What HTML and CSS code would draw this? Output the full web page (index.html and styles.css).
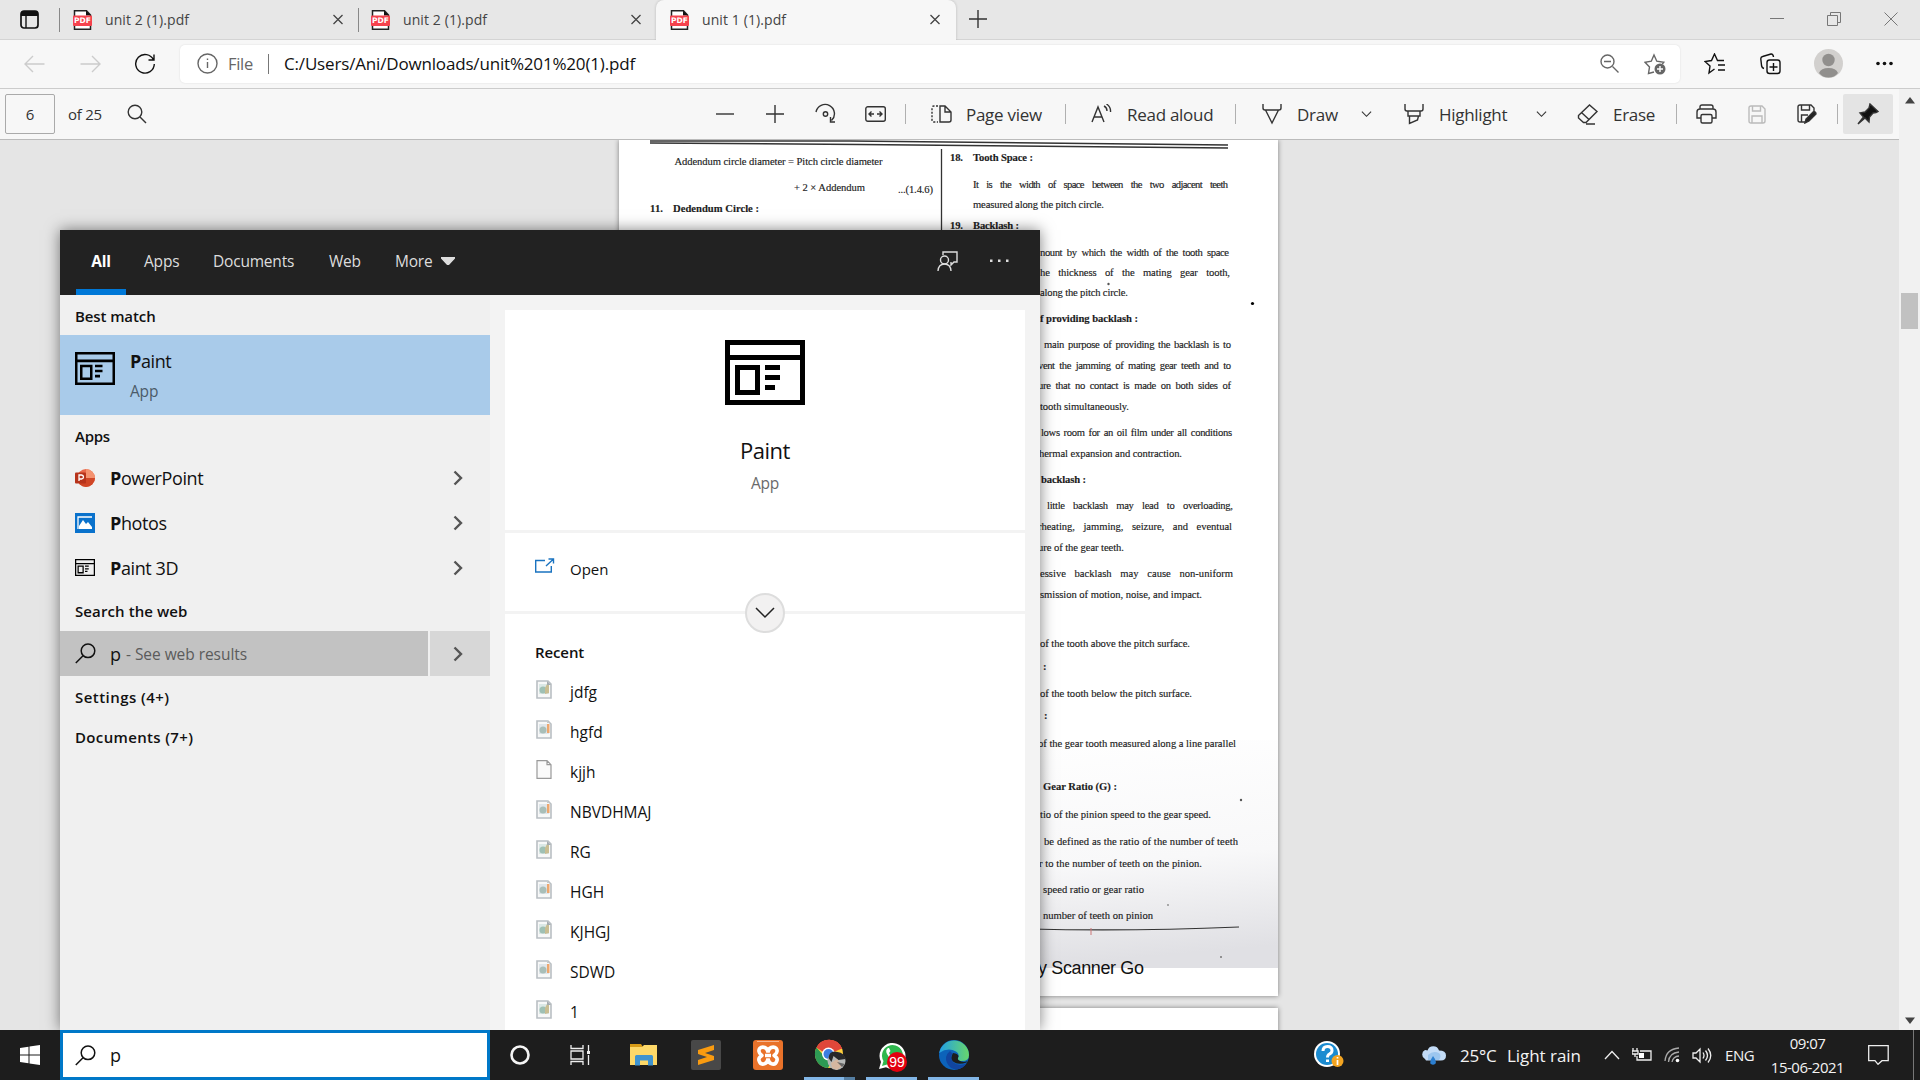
FILE: index.html
```html
<!DOCTYPE html>
<html lang="en">
<head>
<meta charset="utf-8">
<title>unit 1 (1).pdf</title>
<link rel="stylesheet" href="styles.css">
</head>
<body>
<svg width="0" height="0" class="defs">
  <symbol id="pdf" viewBox="0 0 19 20"><path d="M1.5 .8h12l4 4.2v14.2h-16z" fill="#fff" stroke="#222" stroke-width="1.5"/><path d="M13 .5v5h5z" fill="#111"/><rect y="5.5" width="19" height="10.5" rx="1" fill="#f5424d"/></symbol>
  <symbol id="x" viewBox="0 0 10 10"><path d="M.5.5l9 9M9.5.5l-9 9" fill="none" stroke="currentColor" stroke-width="1.3"/></symbol>
  <symbol id="down" viewBox="0 0 12 8"><path d="M1 1.5l5 5 5-5" fill="none" stroke="currentColor" stroke-width="1.2"/></symbol>
  <symbol id="right" viewBox="0 0 10 16"><path d="M1.5 1.5L8 8l-6.500 6.500" fill="none" stroke="#555" stroke-width="2.4"/></symbol>
  <symbol id="lens" viewBox="0 0 21 21"><circle cx="13" cy="7.800" r="6.800" fill="none" stroke="currentColor" stroke-width="1.5"/><path d="M8 12.700L.8 20" stroke="currentColor" stroke-width="1.5"/></symbol>
  <symbol id="window" viewBox="0 0 80 65" preserveAspectRatio="none"><path d="M0 0h80v65H0zM5 5v10h70V5zM5 20v40h70V20z" fill-rule="evenodd"/><path d="M10 25h25v30H10zM15 30v20h15V30z" fill-rule="evenodd"/><path d="M40 25h15v5H40zM40 35h15v5H40zM40 45h10v5H40z"/></symbol>
  <symbol id="image" viewBox="0 0 16 19"><path d="M1 1h11l3 3v14H1z" fill="#f7f8f8" stroke="#b9bfc3" stroke-width="1.600"/><rect x="3" y="4" width="10" height="10" fill="#dbe8e6"/><circle cx="7" cy="10" r="3.500" fill="#9fc0b4"/><path d="M9 14V8l2-4h2v9z" fill="#c9bd92"/><path d="M11 1v4h4" fill="#a5acb0"/></symbol>
  <symbol id="image2" viewBox="0 0 16 19"><path d="M1 1h11l3 3v14H1z" fill="#f7f8f8" stroke="#b9bfc3" stroke-width="1.600"/><rect x="3" y="4" width="10" height="10" fill="#dfe6ea"/><circle cx="7" cy="10" r="3.500" fill="#a9beb8"/><path d="M11 13V4h2.500v9z" fill="#eda66e"/><path d="M11 1v2h3" fill="#c5cacc"/></symbol>
</svg>

<header class="tabstrip">
  <div class="tab-menu"><svg width="19" height="19" viewBox="0 0 19 19"><rect x="1" y="1" width="17" height="17" rx="3" fill="none" stroke="#111" stroke-width="1.700"/><path d="M1 6V3.500Q1 1 3.500 1h12Q18 1 18 3.500V6z" fill="#111"/><path d="M6 5v13" stroke="#111" stroke-width="1.400"/></svg></div>
  <div class="tab first"><span class="pdf-icon"><svg width="19" height="20"><use href="#pdf"/></svg><b>PDF</b></span><span class="name">unit 2 (1).pdf</span><svg width="10" height="11"><use href="#x"/></svg></div>
  <div class="tab"><span class="pdf-icon"><svg width="19" height="20"><use href="#pdf"/></svg><b>PDF</b></span><span class="name">unit 2 (1).pdf</span><svg width="10" height="11"><use href="#x"/></svg></div>
  <div class="tab active"><span class="pdf-icon"><svg width="19" height="20"><use href="#pdf"/></svg><b>PDF</b></span><span class="name">unit 1 (1).pdf</span><svg width="10" height="11"><use href="#x"/></svg></div>
  <svg class="new-tab" width="18" height="18" viewBox="0 0 18 18"><path d="M9 0v18M0 9h18" stroke="#333" stroke-width="1.400"/></svg>
  <div class="window-controls">
    <svg width="14" height="14" viewBox="0 0 14 14"><path d="M0 6.500h14"/></svg>
    <svg width="14" height="14" viewBox="0 0 14 14"><path d="M.5 3.500h10v10H.5zM3.500 3.500v-3h10v10h-3"/></svg>
    <svg width="14" height="14" viewBox="0 0 14 14"><path d="M.5.5l13 13M13.500.5l-13 13"/></svg>
  </div>
</header>

<nav class="toolbar">
  <svg width="21" height="18" viewBox="0 0 21 18" class="dim"><path d="M20.500 9H1.500M9 1L1 9l8 8"/></svg>
  <svg width="21" height="18" viewBox="0 0 21 18" class="dim"><path d="M.5 9h19M12 1l8 8-8 8"/></svg>
  <svg width="22" height="22" viewBox="0 0 22 22" class="dark"><path d="M19.500 7A9.300 9.300 0 1 0 20.300 11M20 1.500V7h-5.500"/></svg>
  <div class="address">
    <svg width="21" height="21" viewBox="0 0 21 21" class="mid"><circle cx="10.500" cy="10.500" r="9.500"/><path d="M10.500 9v6M10.500 5.500v1.500"/></svg>
    <span class="scheme">File</span><i class="rule"></i><span class="url">C:/Users/Ani/Downloads/unit%201%20(1).pdf</span>
    <svg width="19" height="19" viewBox="0 0 19 19" class="mid"><circle cx="7.500" cy="7.500" r="6.500"/><path d="M12.500 12.500l6 6M4 7.500h7"/></svg>
    <svg width="22" height="22" viewBox="0 0 22 22" class="mid"><path d="M10 19l-5.500 1.500 1-6.500L1 9.200l6.300-1L10 2l2.800 6.200 7 1-1.500 2"/><circle cx="16" cy="16" r="5.500" fill="#666" stroke="none"/><path d="M16 13v6M13 16h6" stroke="#fff"/></svg>
  </div>
  <svg width="22" height="22" viewBox="0 0 22 22" class="dark"><path d="M10.500 16l-5.500 4 1-7L1 8.500l6.500-1L10.500 1l3 6.500H20M14 12h7M14 17h7"/></svg>
  <svg width="21" height="22" viewBox="0 0 21 22" class="dark"><path d="M4 15.500Q2 15 1.600 13L.8 6Q.7 4 2.600 3.500L11 1q2-.3 2.500 3"/><rect x="7" y="7" width="13" height="13.500" rx="2.500"/><path d="M13.500 10v8M9.500 14h8"/></svg>
  <svg width="29" height="29" viewBox="0 0 29 29"><circle cx="14.500" cy="14.500" r="14.500" fill="#d2d0ce"/><circle cx="14.500" cy="11" r="6.200" fill="#918f8d"/><path d="M5 24q2-5 9.500-5t9.500 5q-3.500 4.500-9.500 4.500T5 24z" fill="#918f8d"/></svg>
  <svg width="17" height="5" viewBox="0 0 17 5"><circle cx="2" cy="2.500" r="1.800"/><circle cx="8.500" cy="2.500" r="1.800"/><circle cx="15" cy="2.500" r="1.800"/></svg>
</nav>

<main class="viewer">
  <div class="reader">
    <div class="pdf-bar">
      <span class="page-no">6</span><span class="count">of 25</span>
      <svg width="20" height="20" viewBox="0 0 20 20"><circle cx="8" cy="8" r="6.800"/><path d="M13 13l6 6"/></svg>
      <svg width="18" height="18" viewBox="0 0 18 18"><path d="M0 9h18"/></svg>
      <svg width="18" height="18" viewBox="0 0 18 18"><path d="M9 0v18M0 9h18"/></svg>
      <svg width="22" height="22" viewBox="0 0 22 22"><path d="M1 9a9.300 9.300 0 1 1 15.500 8.500M20 19h-4.500v-5"/><circle cx="10.500" cy="11" r="2.200"/></svg>
      <svg width="21" height="16" viewBox="0 0 21 16"><rect x=".8" y=".8" width="19.500" height="14.500" rx="2"/><path d="M9 8H4M6.500 5.500L4 8l2.500 2.500M12 8h5M14.500 5.500L17 8l-2.500 2.500"/></svg>
      <i></i>
      <svg width="21" height="18" viewBox="0 0 21 18"><path d="M9 1h5l6 6v8q0 2-2 2H9zM14 1v6h6"/><path d="M7 1H3Q1 1 1 3v12q0 2 2 2h4" stroke-dasharray="2 1.500"/></svg>
      <span>Page view</span><i></i>
      <svg width="21" height="20" viewBox="0 0 21 20"><path d="M1 18L7 3l6 15M3 13h8M13 2q3 1.500 3 5M15.500 0Q20 3 19.500 8"/></svg>
      <span>Read aloud</span><i></i>
      <svg width="21" height="22" viewBox="0 0 21 22"><path d="M1 1v4q0 2 2 2h14q2 0 2-2V1M3.500 7l6.500 13L16.500 7"/></svg>
      <span>Draw</span><svg width="11" height="8" viewBox="0 0 12 8"><use href="#down"/></svg>
      <svg width="20" height="22" viewBox="0 0 20 22"><path d="M1 1v5q0 2 2 2h14q2 0 2-2V1M4 8v5h12V8M5.500 13v7.500l8-3.500 1-4"/></svg>
      <span>Highlight</span><svg width="11" height="8" viewBox="0 0 12 8"><use href="#down"/></svg>
      <svg width="22" height="21" viewBox="0 0 22 21"><path d="M1.500 11.500L12.500 1 20 7.500 9 18.500H6.500L1.500 14zM5 9l7 6.500M9 20h9"/></svg>
      <span>Erase</span><i></i>
      <svg width="21" height="20" viewBox="0 0 21 20"><path d="M4 5V3q0-2 2-2h9q2 0 2 2v2M5 14H1V8q0-3 3-3h13q3 0 3 3v6h-4"/><rect x="5" y="10.500" width="11" height="8.500" rx="1.500"/></svg>
      <svg width="18" height="19" viewBox="0 0 18 19" class="off"><path d="M1 3q0-2 2-2h11l3 3v12q0 2-2 2H3q-2 0-2-2zM4.500 1v5h8V1M4 18v-7h10v7"/></svg>
      <svg width="21" height="20" viewBox="0 0 21 20"><path d="M8 18H3q-2 0-2-2V3q0-2 2-2h11l3 3v4M4.500 1v5h8V1M4.500 18v-7H11"/><path d="M8 19l1-4 7-7q3-1 3 2l-7 7z" fill="#222"/></svg>
      <i></i>
      <span class="pin"><svg width="22" height="22" viewBox="0 0 22 22"><path d="M13 1l8 7.500-2 1-3 .5-3.500 4-.5 5-4-4L1 21l5.500-7L3 10l5-1 4-4z" fill="#111"/></svg></span>
    </div>
    <div class="canvas">
      <svg class="sheet" width="659" height="856" viewBox="619 140 659 856">
        <defs><linearGradient id="haze" x1=".35" y1="0" x2=".6" y2="1"><stop offset="0" stop-color="#fff"/><stop offset=".6" stop-color="#f8f8f9"/><stop offset="1" stop-color="#e0e0e4"/></linearGradient></defs>
        <rect x="619" y="740" width="659" height="228" fill="url(#haze)"/>
        <g fill="none" stroke="#333"><path d="M650 141L850 141 1228 145" stroke-width="1.500"/><path d="M650 143L860 144.500 1228 148" stroke-width="1.500"/><path d="M941.500 149V240" stroke-width="1.300"/><path d="M1030 929q100 2.500 209-2" stroke-width="1.200"/></g>
        <path d="M1091 928v7" stroke="#c77"/><circle cx="1252.500" cy="303.500" r="1.600"/><circle cx="1108.500" cy="284" r="1.200" fill="#555"/><circle cx="1241" cy="800" r="1.200" fill="#555"/><circle cx="1221" cy="957" r="1" fill="#777"/><circle cx="1168" cy="905" r=".9" fill="#888"/>
        <g class="scan">
          <text x="674.500" y="165" textLength="208">Addendum circle diameter = Pitch circle diameter</text>
          <text x="794" y="191" textLength="71">+ 2 × Addendum</text><text x="898" y="192.500" textLength="35">...(1.4.6)</text>
          <text x="973" y="188" class="wide5" textLength="255">It is the width of space between the two adjacent teeth</text>
          <text x="973" y="208" textLength="131">measured along the pitch circle.</text>
          <text x="1040" y="255.500" class="wide2" textLength="189">nount by which the width of the tooth space</text>
          <text x="1040" y="275.500" class="wide5" textLength="190">he thickness of the mating gear tooth,</text>
          <text x="1040" y="296" textLength="88">along the pitch circle.</text>
          <text x="1044" y="348" class="wide1" textLength="187">main purpose of providing the backlash is to</text>
          <text x="1038" y="368.500" class="wide2" textLength="193">vent the jamming of mating gear teeth and to</text>
          <text x="1038" y="389" class="wide2" textLength="193">ure that no contact is made on both sides of</text>
          <text x="1040" y="410" textLength="89">tooth simultaneously.</text>
          <text x="1041" y="436" class="wide1" textLength="191">lows room for an oil film under all conditions</text>
          <text x="1039" y="457" textLength="143">hermal expansion and contraction.</text>
          <text x="1047" y="509" class="wide5" textLength="186">little backlash may lead to overloading,</text>
          <text x="1038" y="530" class="wide5" textLength="194">rheating, jamming, seizure, and eventual</text>
          <text x="1038" y="550.500" textLength="86">ure of the gear teeth.</text>
          <text x="1040" y="577" class="wide5" textLength="193">essive backlash may cause non-uniform</text>
          <text x="1040" y="597.500" textLength="162">smission of motion, noise, and impact.</text>
          <text x="1040" y="646.500" textLength="150">of the tooth above the pitch surface.</text>
          <text x="1040" y="696.500" textLength="152">of the tooth below the pitch surface.</text>
          <text x="1038" y="746.500" textLength="198">of the gear tooth measured along a line parallel</text>
          <text x="1040" y="818" textLength="171">tio of the pinion speed to the gear speed.</text>
          <text x="1044" y="845" textLength="194">be defined as the ratio of the number of teeth</text>
          <text x="1039" y="866.500" textLength="163">r to the number of teeth on the pinion.</text>
          <text x="1043" y="893" textLength="101">speed ratio or gear ratio</text>
          <text x="1043" y="919" textLength="110">number of teeth on pinion</text>
          <g class="strong">
            <text x="650" y="212" textLength="13">11.</text><text x="673" y="212" textLength="86">Dedendum Circle :</text>
            <text x="950" y="161" textLength="13">18.</text><text x="973" y="161" textLength="60">Tooth Space :</text>
            <text x="950" y="229" textLength="13">19.</text><text x="973" y="229" textLength="46">Backlash :</text>
            <text x="1040" y="322" textLength="98">f providing backlash :</text><text x="1041" y="483" textLength="45">backlash :</text>
            <text x="1043" y="670">:</text><text x="1044" y="719">:</text><text x="1043" y="790" textLength="74">Gear Ratio (G) :</text>
          </g>
          <text x="1038" y="974" class="brand" textLength="106">y Scanner Go</text>
        </g>
      </svg>
      <div class="sheet next"></div>
    </div>
  </div>
  <div class="scrollbar"><svg width="10" height="7" viewBox="0 0 10 7"><path d="M0 6.500L5 0l5 6.500z"/></svg><b></b><svg width="10" height="7" viewBox="0 0 10 7"><path d="M0 .5L5 7l5-6.500z"/></svg></div>
</main>

<section class="search">
  <div class="search-head">
    <span class="on">All</span><span class="apps">Apps</span><span>Documents</span><span>Web</span><span class="more">More<svg width="14" height="8" viewBox="0 0 14 8"><path d="M0 .5h14L7 8z" fill="#ddd"/></svg></span>
    <svg class="feedback" width="21" height="21" viewBox="0 0 21 21"><path d="M6 4V1h14v10h-3l-3 3v-3"/><circle cx="7.500" cy="9" r="4"/><path d="M1 20q.5-7 6.500-7t6.500 7"/></svg>
    <svg width="19" height="4" viewBox="0 0 19 4"><path d="M0 .5h2.500V3H0zM8 .5h2.500V3H8zM16 .5h2.500V3H16z" fill="#ddd" stroke="none"/></svg>
  </div>
  <div class="search-body">
    <div class="results">
      <h3 class="h-best">Best match</h3>
      <div class="best"><svg width="40" height="33"><use href="#window"/></svg><div><p><b>P</b>aint</p><small>App</small></div></div>
      <h3 class="h-apps">Apps</h3>
      <div class="app"><svg width="20" height="20" viewBox="0 0 20 20"><circle cx="11" cy="10" r="9" fill="#e8684a"/><path d="M11 1a9 9 0 0 1 9 9h-9z" fill="#f4926f"/><path d="M2 10a9 9 0 0 0 18 0z" fill="#d04626"/><rect y="4.500" width="11" height="11" rx="1" fill="#b7331b"/><path d="M4 13V7h2.500q2 .2 2 2t-2 2H4" fill="none" stroke="#fff" stroke-width="1.300"/></svg><p><b>P</b>owerPoint</p><svg width="10" height="16"><use href="#right"/></svg></div>
      <div class="app"><svg width="20" height="20" viewBox="0 0 20 20"><path d="M0 0h20v20H0z" fill="#0a72cc"/><path d="M17 4H3v12" fill="none" stroke="#fff" stroke-width="1.300"/><path d="M4 16V13l4-6 3 4 2-2 4 5v2z" fill="#fff"/></svg><p><b>P</b>hotos</p><svg width="10" height="16"><use href="#right"/></svg></div>
      <div class="app"><svg width="20" height="17"><use href="#window"/></svg><p><b>P</b>aint 3D</p><svg width="10" height="16"><use href="#right"/></svg></div>
      <h3 class="h-web">Search the web</h3>
      <div class="web"><div><svg width="21" height="21"><use href="#lens"/></svg><p>p</p><span>- See web results</span></div><em><svg width="10" height="16"><use href="#right"/></svg></em></div>
      <h3 class="h-set">Settings (4+)</h3>
      <h3 class="h-doc">Documents (7+)</h3>
    </div>
    <div class="detail">
      <div class="card hero"><svg width="80" height="65"><use href="#window"/></svg><h2>Paint</h2><p>App</p></div>
      <div class="card open"><svg width="20" height="15" viewBox="0 0 20 15"><path d="M10 2.500H.7v11.500h15.600V8M11 8l7-6.500M13.500 1H18.500V5.500" fill="none" stroke="#1a73c0" stroke-width="1.400"/></svg><span>Open</span>
        <div class="expand"><svg width="20" height="12" viewBox="0 0 20 12"><path d="M1 1l9 9 9-9" fill="none" stroke="#222" stroke-width="1.500"/></svg></div></div>
      <div class="card recent"><h3>Recent</h3>
        <ul>
          <li><svg width="16" height="19"><use href="#image"/></svg>jdfg</li>
          <li><svg width="16" height="19"><use href="#image2"/></svg>hgfd</li>
          <li><svg width="16" height="19" viewBox="0 0 16 19"><path d="M1 .7h10l4 4v13.600H1zM11 .7v4h4" fill="#fafafa" stroke="#999" stroke-width="1.200"/></svg>kjjh</li>
          <li><svg width="16" height="19"><use href="#image2"/></svg>NBVDHMAJ</li>
          <li><svg width="16" height="19"><use href="#image"/></svg>RG</li>
          <li><svg width="16" height="19"><use href="#image2"/></svg>HGH</li>
          <li><svg width="16" height="19"><use href="#image"/></svg>KJHGJ</li>
          <li><svg width="16" height="19"><use href="#image2"/></svg>SDWD</li>
          <li><svg width="16" height="19"><use href="#image"/></svg>1</li>
        </ul>
      </div>
    </div>
  </div>
</section>

<footer class="taskbar">
  <div class="start"><svg width="20" height="20" viewBox="0 0 20 20"><path d="M0 3l8.500-1.200v7.700H0zM9.500 1.600L20 0v9.500H9.500zM0 10.500h8.500v7.800L0 17zM9.500 10.500H20V20L9.500 18.400z" fill="#fff"/></svg></div>
  <div class="searchbox"><svg width="21" height="21"><use href="#lens"/></svg><span>p</span></div>
  <div class="slot s1"><svg width="20" height="20" viewBox="0 0 20 20"><circle cx="10" cy="10" r="8.500" fill="none" stroke="#f5f5f5" stroke-width="2.600"/></svg></div>
  <div class="slot s2"><svg width="21" height="20" viewBox="0 0 21 20"><path d="M1 0v3.500h12V0M1 20v-3.500h12V20M1 6h12v8H1zM18.500 0v6M18.500 10v10" fill="none" stroke="#eee" stroke-width="1.300"/><path d="M17 6h3v3h-3z" fill="#eee"/></svg></div>
  <div class="slot"><svg width="28" height="24" viewBox="0 0 28 24"><path d="M0 1h11l2 3h-13z" fill="#d89b16"/><path d="M0 4h12l2-2h13v20H0z" fill="#fdd868"/><path d="M5 22.500v-9q0-1.500 1.500-1.500h15q1.500 0 1.500 1.500v9h-5v-5h-8v5z" fill="#3f93cf"/></svg></div>
  <div class="slot"><svg width="30" height="30" viewBox="0 0 30 30"><rect width="30" height="30" rx="2" fill="#484848"/><path d="M7 10l16-5v5l-9 3 9 3v4L7 25v-5l9-3-9-3z" fill="#f99b10"/></svg></div>
  <div class="slot"><svg width="30" height="30" viewBox="0 0 30 30"><rect width="30" height="30" rx="3" fill="#e9722a"/><path d="M4 1.500h22" stroke="#f5b48c"/><path d="M15 12.500C14 5 5 6 6 11.500c.4 3 3 3.500 3 4S5 17 6 20.500C7.500 26 14 25 15 18.500c1 6.500 7.500 7.500 9 2 1-3.500-3-4.500-3-5s2.600-1 3-4C25 6 16 5 15 12.500zM12 15.500h6" fill="none" stroke="#fff" stroke-width="3.600"/></svg></div>
  <div class="slot run split"><svg width="32" height="32" viewBox="0 0 32 32"><circle cx="15" cy="15" r="14" fill="#ffcf3d"/><path d="M15 15L2.500 8.500A14 14 0 0 1 28 9.500z" fill="#e0473a"/><path d="M2.500 8.500A14 14 0 0 0 14 29l5-9-8-2z" fill="#2d9a54"/><path d="M2.500 8.500A14 14 0 0 1 28 9.500H15l-5 4z" fill="#e0473a"/><circle cx="14.500" cy="15" r="6.500" fill="#fff"/><circle cx="14.500" cy="15" r="5" fill="#3c7de0"/><circle cx="22.500" cy="22" r="9" fill="#b6b9b8"/><path d="M14.500 19q1-8 9-6 7 1 8 7l-7 1-5-4-2 6z" fill="#27282a"/><path d="M17 24l6-4 5 7-5 4-5-2z" fill="#d4b6a0"/><path d="M23 23l8 2-3 3z" fill="#666"/></svg></div>
  <div class="slot run wa"><svg width="28" height="29" viewBox="0 0 28 29"><path d="M1 28l2-7A13 13 0 1 1 8 26.200z" fill="#fff"/><path d="M4 25l1.500-5A10.500 10.500 0 1 1 9 23.500z" fill="#2fb84e"/><path d="M10 7q-3 2-1 6 3 6 9 7 4-1 3-4l-4-2-2 2q-3-1-4-4l1.500-2L11 7z" fill="#fff"/></svg><span class="badge">99</span></div>
  <div class="slot run"><svg width="30" height="30" viewBox="0 0 30 30"><defs><linearGradient id="eg" x2="1"><stop stop-color="#219ee5"/><stop offset="1" stop-color="#68d76b"/></linearGradient></defs><circle cx="15" cy="15" r="15" fill="#0c63ba"/><path d="M.2 13A15 15 0 0 1 30 15q0 6-7 6-5 0-4-3 2-4-2-6.500Q9 7 .2 13z" fill="url(#eg)"/><path d="M11 11q-6 5-3 12 3 6 10 6.500a15 15 0 0 0 9.500-6Q19 27 14 22q-3-4-.5-8.500z" fill="#1145a0"/><path d="M14 13q-3 5 0 8.500 5 4 13.500 1l.8-1.300Q24 23 20 20.500q-2-1.500-.5-4 0-3-5.500-3.500z" fill="#1d1d1d"/></svg></div>
  <div class="help"><svg width="30" height="28" viewBox="0 0 30 28"><circle cx="13" cy="13" r="13" fill="#fff"/><circle cx="13" cy="13" r="11" fill="#1b8bd0"/><path d="M9 10q0-4.500 4.500-4.500T18 9.500q0 2.500-2.500 3.500-2 1-2 3.500M13.500 18.500v2.500" fill="none" stroke="#fff" stroke-width="3"/><circle cx="23.500" cy="20" r="6" fill="#f3a421"/><path d="M23.500 16v1.600M23.500 19v5" stroke="#fff" stroke-width="1.700"/></svg></div>
  <div class="weather"><svg width="26" height="20" viewBox="0 0 26 20"><path d="M5 14a5 5 0 0 1 0-9q2 0 2.500.5a6 6 0 0 1 11.500 0q7 0 7 5t-5 5H6z" fill="#c3dcf7"/><path d="M8 10q5-5 11-2 3 3 0 7H8z" fill="#9cc6ef"/><path d="M13 11q4 5 2.500 7.500-2.500 2.500-5 0Q9.500 16 13 11z" fill="#2c7fd0"/></svg><span class="deg">25°C</span><span class="sky">Light rain</span></div>
  <svg class="tray" width="16" height="10" viewBox="0 0 16 10"><path d="M1 9l7-7.500L15 9"/></svg>
  <svg class="tray" width="20" height="15" viewBox="0 0 20 15"><path d="M8 3h11v9H5V8M1 0v3M5 0v3M0 3h6v3H0zM3 6v3"/><path d="M7 5h5v5H7z" fill="#fff" stroke="none"/></svg>
  <svg class="tray" width="16" height="16" viewBox="0 0 16 16"><path d="M1 14Q2 2 15 1M4.500 15Q5 6 15 5M8 15q1-5.500 7-6" stroke="#aaa"/><circle cx="13.500" cy="13.500" r="1.800" fill="#fff" stroke="none"/></svg>
  <svg class="tray" width="20" height="17" viewBox="0 0 20 17"><path d="M1 6h3l4-4v13l-4-4H1zM11 5.500q2 3 0 6M13.500 3.500q4 5 0 10M16 1.500q5.500 7 0 14"/></svg>
  <span class="lang">ENG</span>
  <div class="clock"><span>09:07</span><span>15-06-2021</span></div>
  <svg class="tray note" width="21" height="20" viewBox="0 0 21 20"><path d="M.7.7h19.500v15H14l-4 3.600-3-3.600H.7z"/></svg>
  <i class="desk"></i>
</footer>
</body>
</html>
```
FILE: styles.css
```css
* { box-sizing: border-box; }
html, body { margin: 0; height: 100%; }
body { width: 1920px; height: 1080px; overflow: hidden; display: flex; flex-direction: column; font-family: "Open Sans", "Noto Sans", sans-serif; color: #111; position: relative; background: #e5e5e5; }
p, h2, h3, ul { margin: 0; padding: 0; font-weight: 400; }
svg { display: block; flex: none; }
span, p, h2, h3, small { white-space: nowrap; }
.defs { position: absolute; }

/* tabs */
.tabstrip { height: 40px; flex: none; display: flex; background: #e7e7e7; border-bottom: 1px solid #d4d4d4; }
.tab-menu { width: 59px; padding: 10px 0 0 20px; }
.tab { width: 298px; height: 40px; display: flex; align-items: center; padding: 0 15px 1px 13px; position: relative; color: #444; }
.tab.first { width: 299px; padding-left: 14px; }
.tab:not(.active)::before { content: ""; position: absolute; left: 0; top: 8px; height: 24px; width: 1px; background: #888; }
.tab.active { width: 300px; background: #f7f7f7; border-radius: 8px 8px 0 0; padding-right: 16px; padding-left: 14px; box-shadow: 0 0 3px rgba(0,0,0,.2); clip-path: inset(-4px -4px 0 -4px); }
.tab .name { flex: 1; margin: -1px 0 0 13px; font-size: 14px; letter-spacing: .1px; }
.pdf-icon { position: relative; width: 19px; }
.pdf-icon b { position: absolute; left: 0; top: 5px; width: 19px; text-align: center; font: 700 7.5px/11px "DejaVu Sans", sans-serif; color: #fff; }
.new-tab { margin: 10px 0 0 13px; }
.window-controls { display: flex; gap: 43px; margin: 12px 22px 0 auto; fill: none; stroke: #777; }

/* address bar */
.toolbar { height: 49px; flex: none; display: grid; grid-template-columns: 56px 54px 46px 1524px 56px 54px 62px 20px; padding: 0 0 1px 24px; align-items: center; background: #f7f7f7; border-bottom: 1px solid #ccc; }
.toolbar svg { fill: none; stroke-width: 1.4; }
.dim { stroke: #ccc; }
.dark { stroke: #111; }
.mid { stroke: #666; }
.toolbar > svg:nth-last-child(-n+2), .toolbar > svg:nth-last-child(-n+2) * { stroke: none; }
.toolbar > svg:last-child { fill: #111; }
.address { width: 1500px; height: 38px; background: #fff; border-radius: 5px; box-shadow: 0 0 2px rgba(0,0,0,.12); display: flex; align-items: center; padding: 0 14px 0 17px; }
.scheme { margin: -1px 0 0 10px; width: 40px; color: #666; font-size: 16.5px; letter-spacing: -.3px; }
.rule { width: 1px; height: 20px; background: #777; margin-right: 15px; }
.url { flex: 1; margin-top: -1px; font-size: 17px; letter-spacing: -.17px; color: #111; }
.address svg:last-child { margin-left: 25px; }

/* reader */
.viewer { flex: 1; display: flex; min-height: 0; }
.reader { width: 1899px; display: flex; flex-direction: column; }
.pdf-bar { height: 51px; flex: none; background: #f7f7f7; border-bottom: 1px solid #bbb; display: grid; align-items: center; padding-left: 5px; font-size: 17px; letter-spacing: -.28px; color: #333;
  grid-template-columns: 63px 59px 589px 50px 49px 50px 40px 26px 35px 99px 26px 36px 108px 27px 35px 64px 43px 35px 97px 41px 36px 63px 20px 52px 49px 40px 6px 50px; }
.pdf-bar > :nth-child(n+9) { position: relative; }
.pdf-bar span:not(.pin):not(.page-no):not(.count) { padding-top: 1px; }
.pdf-bar svg { fill: none; stroke: #333; stroke-width: 1.4; }
.pdf-bar svg.off { stroke: #bbb; }
.pdf-bar i { width: 1px; height: 20px; background: #b0b0b0; }
.pdf-bar .page-no { width: 50px; height: 40px; border: 1px solid #aaa; border-radius: 2px; text-align: center; font-size: 15px; line-height: 38px; }
.pdf-bar .count { font-size: 15px; }
.pin { width: 50px; height: 40px; background: #e4e4e4; display: grid; place-items: center; border-radius: 2px; }
.canvas { flex: 1; min-height: 0; overflow: hidden; padding-left: 619px; }
.sheet { background: #fff; box-shadow: 0 0 5px rgba(0,0,0,.45); }
.sheet.next { width: 659px; height: 200px; margin-top: 12px; }
.scan { font: 10.6px "Liberation Serif", serif; fill: #1c1c1c; stroke: #1c1c1c; stroke-width: .15px; }
.scan .strong { font-weight: 700; }
.scan .wide1 { word-spacing: 1.5px; }
.scan .wide2 { word-spacing: 2.5px; }
.scan .wide5 { word-spacing: 6px; }
.scan .brand { font: 18px "Liberation Sans", sans-serif; fill: #111; stroke: none; }
.scrollbar { width: 21px; background: #f1f1f1; display: flex; flex-direction: column; align-items: center; padding: 8px 0 6px; }
.scrollbar svg { fill: #444; }
.scrollbar b { width: 17px; height: 36px; background: #c1c1c1; margin: 189px 0 auto; }

/* start search */
.search { position: absolute; left: 60px; top: 230px; width: 980px; height: 800px; display: flex; flex-direction: column; box-shadow: 0 0 14px rgba(0,0,0,.5); }
.search-head { height: 65px; flex: none; background: #222; color: #ddd; font-size: 15.5px; letter-spacing: -.2px; display: grid; grid-template-columns: 67px 70px 116px 66px 542px 53px 30px; padding: 0 0 3px 16px; align-items: center; }
.search-head .on { width: 50px; height: 65px; line-height: 63px; margin-bottom: -3px; text-align: center; font-weight: 700; color: #fff; border-bottom: 6px solid #0078d7; }
.search-head .apps { padding-left: 1px; }
.more { display: flex; align-items: center; gap: 8px; }
.search-head svg { fill: none; stroke: #ddd; stroke-width: 1.4; }
.search-body { flex: 1; display: flex; min-height: 0; }
.results { width: 430px; background: #f0f0f0; }
.results h3 { padding-left: 15px; font-size: 15px; font-weight: 600; letter-spacing: -.1px; }
.results .h-best { height: 40px; line-height: 42px; }
.results .h-apps { height: 40px; line-height: 42px; letter-spacing: -.25px; }
.results .h-web { height: 41px; line-height: 43px; letter-spacing: .1px; }
.results .h-set { height: 40px; line-height: 42px; letter-spacing: .45px; }
.results .h-doc { height: 40px; line-height: 42px; letter-spacing: .35px; }
.best { height: 80px; background: #a9cbea; padding: 13px 15px 0; display: flex; gap: 15px; }
.best > svg { margin-top: 4px; }
.best p { font-size: 18px; line-height: 26px; letter-spacing: -.4px; }
.best small { display: block; font-size: 15.5px; line-height: 22px; margin-top: 6px; color: #4c5b69; letter-spacing: -.2px; }
.best b, .app b { font-weight: 700; }
.app { height: 45px; display: grid; grid-template-columns: 35px 343px 10px; padding-left: 15px; align-items: center; }
.app p { font-size: 18px; letter-spacing: -.4px; }
.web { height: 45px; display: flex; gap: 2px; }
.web div { width: 368px; background: #c2c2c2; display: flex; align-items: center; padding-left: 15px; }
.web p { font-size: 18px; width: 16px; margin-left: 14px; }
.web div span { font-size: 15.5px; color: #5b5b5b; letter-spacing: -.05px; }
.web em { width: 60px; background: #d7d7d7; display: flex; align-items: center; padding-left: 23px; }
.detail { flex: 1; background: #f3f3f3; padding: 15px 15px 0; display: flex; flex-direction: column; gap: 3px; }
.card { background: #fff; flex: none; }
.hero { height: 220px; padding-top: 30px; display: flex; flex-direction: column; align-items: center; }
.hero h2 { font-size: 22px; line-height: 30px; margin-top: 30px; letter-spacing: -.5px; }
.hero p { font-size: 15.5px; line-height: 22px; margin-top: 7px; color: #6a6a6a; letter-spacing: -.2px; }
.open { height: 78px; padding: 0 30px; display: flex; align-items: center; position: relative; font-size: 15px; }
.open > svg { margin-top: -14px; }
.open > span { margin: -7px 0 0 15px; }
.expand { position: absolute; left: 240px; bottom: -22px; width: 40px; height: 40px; border-radius: 50%; background: #f2f1f1; border: 2px solid #ddd; display: grid; place-items: center; }
.recent { flex: 1 1 0; min-height: 0; overflow: hidden; padding: 17px 30px 0; }
.recent h3 { font-size: 15px; line-height: 42px; font-weight: 600; height: 43px; letter-spacing: -.1px; }
.recent ul { list-style: none; margin-top: -2px; }
.recent li { height: 40px; display: flex; align-items: center; gap: 18px; padding-left: 1px; font-size: 15.5px; letter-spacing: 0; }
.recent li svg { margin-top: -5px; }

/* taskbar */
.taskbar { height: 50px; flex: none; background: #1d1d1d; display: flex; align-items: center; position: relative; color: #f3f3f3; }
.start { width: 60px; padding-left: 20px; }
.searchbox { width: 430px; height: 50px; background: #fff; border: 3px solid #0078c8; color: #111; display: flex; align-items: center; gap: 14px; padding-left: 12px; font-size: 18px; }
.slot { width: 62px; height: 50px; display: grid; place-items: center; position: relative; }
.slot.s1 { width: 60px; }
.slot.s2 { width: 63px; padding-right: 3px; }
.run::after { content: ""; position: absolute; left: 5px; bottom: 0; width: 51px; height: 3px; background: #82b6e6; }
.split::after { background: linear-gradient(90deg, #82b6e6 40px, #557ea2 40px); }
.badge { position: absolute; left: 26px; top: 22px; width: 20px; height: 20px; border-radius: 50%; background: #e3000f; color: #fff; font: 14px/20px "Liberation Sans", sans-serif; text-align: center; }
.help { margin-left: 329px; width: 106px; }
.weather { display: flex; align-items: center; width: 184px; font-size: 17px; letter-spacing: -.05px; }
.deg { margin-left: 14px; width: 47px; letter-spacing: -.2px; }
.tray { fill: none; stroke: #eee; stroke-width: 1.3; margin-right: 12px; }
.lang { font-size: 15px; letter-spacing: -.4px; width: 45px; margin-left: 1px; }
.clock { display: flex; flex-direction: column; align-items: center; width: 75px; font-size: 15px; line-height: 24px; letter-spacing: -.5px; }
.note { margin-left: 23px; margin-right: 24px; }
.desk { width: 1px; height: 50px; background: #777; }
```
